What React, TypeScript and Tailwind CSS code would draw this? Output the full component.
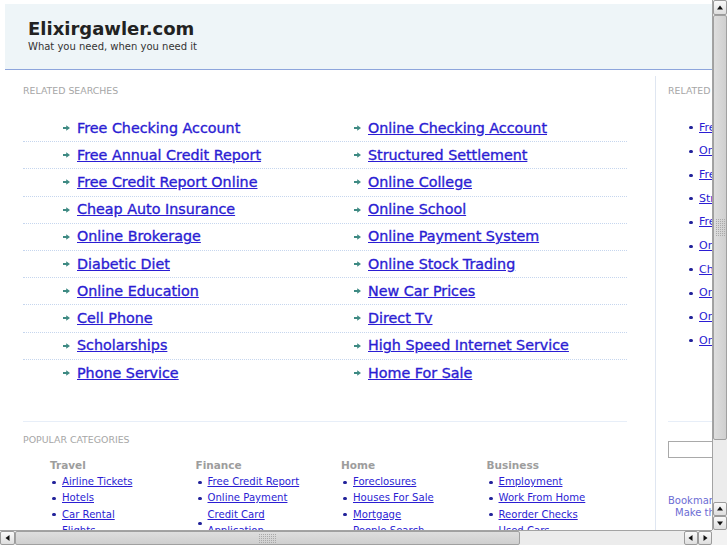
import React from "react";

const left = [
  "Free Checking Account",
  "Free Annual Credit Report",
  "Free Credit Report Online",
  "Cheap Auto Insurance",
  "Online Brokerage",
  "Diabetic Diet",
  "Online Education",
  "Cell Phone",
  "Scholarships",
  "Phone Service",
];
const right = [
  "Online Checking Account",
  "Structured Settlement",
  "Online College",
  "Online School",
  "Online Payment System",
  "Online Stock Trading",
  "New Car Prices",
  "Direct Tv",
  "High Speed Internet Service",
  "Home For Sale",
];
const side: string[] = [];
for (let i = 0; i < 5; i++) {
  side.push(left[i]);
  side.push(right[i]);
}

const cats: { title: string; items: string[] }[] = [
  { title: "Travel", items: ["Airline Tickets", "Hotels", "Car Rental", "Flights"] },
  { title: "Finance", items: ["Free Credit Report", "Online Payment", "Credit Card Application", "Insurance"] },
  { title: "Home", items: ["Foreclosures", "Houses For Sale", "Mortgage", "People Search"] },
  { title: "Business", items: ["Employment", "Work From Home", "Reorder Checks", "Used Cars"] },
];

function Arrow() {
  return (
    <svg width="7" height="6" viewBox="0 0 7 6" className="shrink-0">
      <path d="M0 2.1h3.2V0.2L7 3 3.2 5.8V3.9H0z" fill="#3e8a83" />
    </svg>
  );
}

function Tri({ dir }: { dir: "up" | "down" | "left" | "right" }) {
  const d =
    dir === "up"
      ? "M1 5.5L4 1.5 7 5.5z"
      : dir === "down"
      ? "M1 2.5L4 6.5 7 2.5z"
      : dir === "left"
      ? "M5.5 1L1.5 4 5.5 7z"
      : "M2.5 1L6.5 4 2.5 7z";
  return (
    <svg width="8" height="8" viewBox="0 0 8 8">
      <path d={d} fill="#111" />
    </svg>
  );
}

function Btn({ dir, cls }: { dir: "up" | "down" | "left" | "right"; cls: string }) {
  return (
    <div
      className={
        "flex items-center justify-center border border-[#9b9b9b] rounded-[2px] bg-gradient-to-b from-[#fafafa] to-[#dedede] shrink-0 " +
        cls
      }
    >
      <Tri dir={dir} />
    </div>
  );
}

function Grip({ w, h }: { w: number; h: number }) {
  const dots: React.ReactNode[] = [];
  for (let x = 0; x < w; x += 2)
    for (let y = 0; y < h; y += 2)
      dots.push(<rect key={x + "-" + y} x={x} y={y} width="1" height="1" fill="#a9a9a9" />);
  return (
    <svg width={w} height={h} viewBox={`0 0 ${w} ${h}`}>
      {dots}
    </svg>
  );
}

export default function App() {
  return (
    <div className="w-[727px] h-[545px] overflow-hidden flex flex-col bg-white font-['DejaVu_Sans','Verdana',sans-serif]">
      <div className="flex h-[530px]">
        {/* viewport */}
        <div className="w-[712px] h-[530px] overflow-hidden">
          <div className="w-[942px]">
            {/* header */}
            <div className="mt-[4px] ml-[5px] w-[937px] h-[66px] bg-[#eef5f8] border-b border-[#8da5dc] pl-[23px] pt-[14px]">
              <div className="text-[18px] leading-[22px] font-bold text-[#222]">Elixirgawler.com</div>
              <div className="text-[10px] leading-[13px] text-[#333]">What you need, when you need it</div>
            </div>
            {/* body */}
            <div className="flex ml-[5px]">
              <div className="w-[650px] pl-[18px] pr-[28px] pt-[15px]">
                <div className="text-[9.4px] leading-[12px] text-[#a6a6a6]">RELATED SEARCHES</div>
                <div className="mt-[18px]">
                  {left.map((l, i) => (
                    <div
                      key={l}
                      className={
                        "flex items-center h-[27.2px] " +
                        (i < left.length - 1 ? "border-b border-dotted border-[#c6d6ee]" : "")
                      }
                    >
                      <div className="w-[291px] pl-[40px] flex items-center gap-[7px]">
                        <Arrow />
                        <a
                          href="#"
                          className={
                            "text-[14.3px] leading-[17px] text-[#2b1dd3] whitespace-nowrap [-webkit-text-stroke:0.35px_#2b1dd3] " +
                            (i === 0 ? "no-underline" : "underline")
                          }
                        >
                          {l}
                        </a>
                      </div>
                      <div className="pl-[40px] flex items-center gap-[7px]">
                        <Arrow />
                        <a
                          href="#"
                          className="text-[14.3px] leading-[17px] text-[#2b1dd3] underline whitespace-nowrap [-webkit-text-stroke:0.35px_#2b1dd3]"
                        >
                          {right[i]}
                        </a>
                      </div>
                    </div>
                  ))}
                </div>
                <div className="mt-[34px] border-t border-[#e7eef8]" />
                <div className="mt-[12px] text-[9.4px] leading-[12px] text-[#a6a6a6]">POPULAR CATEGORIES</div>
                <div className="mt-[11px] ml-[27px] grid grid-cols-[145.5px_145.5px_145.5px_145.5px]">
                  {cats.map((c) => (
                    <div key={c.title}>
                      <div className="text-[10.5px] leading-[17px] font-bold text-[#9d9d9d]">{c.title}</div>
                      {c.items.map((it) => (
                        <div key={it} className="flex items-center">
                          <span className="ml-[2px] mr-[6px] w-[4px] h-[3px] rounded-full bg-[#22229a] shrink-0" />
                          <a href="#" className="w-[105px] text-[10.1px] leading-[16.4px] text-[#2b1dd3] underline">
                            {it}
                          </a>
                        </div>
                      ))}
                    </div>
                  ))}
                </div>
              </div>
              {/* sidebar */}
              <div className="w-[280px] mt-[6px] border-l border-[#dfe6f1] pl-[12px] pt-[9px] h-[600px]">
                <div className="text-[9.4px] leading-[12px] text-[#a6a6a6]">RELATED SEARCHES</div>
                <div className="mt-[19px]">
                  {side.map((s) => (
                    <div key={s} className="flex items-center h-[23.67px] pl-[21px]">
                      <span className="w-[4px] h-[3px] rounded-full bg-[#22229a] mr-[6px] shrink-0" />
                      <a href="#" className="text-[11px] leading-[14px] text-[#2b1dd3] underline whitespace-nowrap">
                        {s}
                      </a>
                    </div>
                  ))}
                </div>
                <div className="mt-[68px] border-t border-[#e7eef8] w-[230px]" />
                <div className="mt-[19px] h-[17px] w-[160px] border border-[#a9a9a9] bg-white" />
                <div className="mt-[37px] text-[10px] leading-[12px] text-[#6c6cd4]">Bookmark this page</div>
                <div className="pl-[7px] text-[10px] leading-[12px] text-[#6c6cd4]">Make this your homepage</div>
              </div>
            </div>
          </div>
        </div>
        {/* vertical scrollbar */}
        <div className="w-[15px] h-[530px] flex flex-col bg-[#ececec] border-l border-[#a3a3a3]">
          <Btn dir="up" cls="h-[15px] w-[14px]" />
          <div className="h-[425px] w-[14px] bg-gradient-to-r from-[#dedede] to-[#cfcfcf] border border-[#a0a0a0] rounded-[2px] flex items-center justify-center">
            <Grip w={9} h={17} />
          </div>
          <div className="flex-1" />
          <Btn dir="up" cls="h-[14px] w-[14px]" />
          <Btn dir="down" cls="h-[14px] w-[14px]" />
        </div>
      </div>
      {/* horizontal scrollbar */}
      <div className="flex h-[15px]">
        <div className="w-[712px] h-[15px] flex bg-[#ececec] border-t border-[#a3a3a3]">
          <Btn dir="left" cls="w-[15px] h-[14px]" />
          <div className="w-[505px] h-[14px] bg-gradient-to-b from-[#dedede] to-[#cfcfcf] border border-[#a0a0a0] rounded-[2px] flex items-center justify-center">
            <Grip w={17} h={9} />
          </div>
          <div className="flex-1" />
          <Btn dir="left" cls="w-[14px] h-[14px]" />
          <Btn dir="right" cls="w-[14px] h-[14px]" />
        </div>
        <div className="w-[15px] h-[15px] bg-[#f2f2f2]" />
      </div>
    </div>
  );
}
